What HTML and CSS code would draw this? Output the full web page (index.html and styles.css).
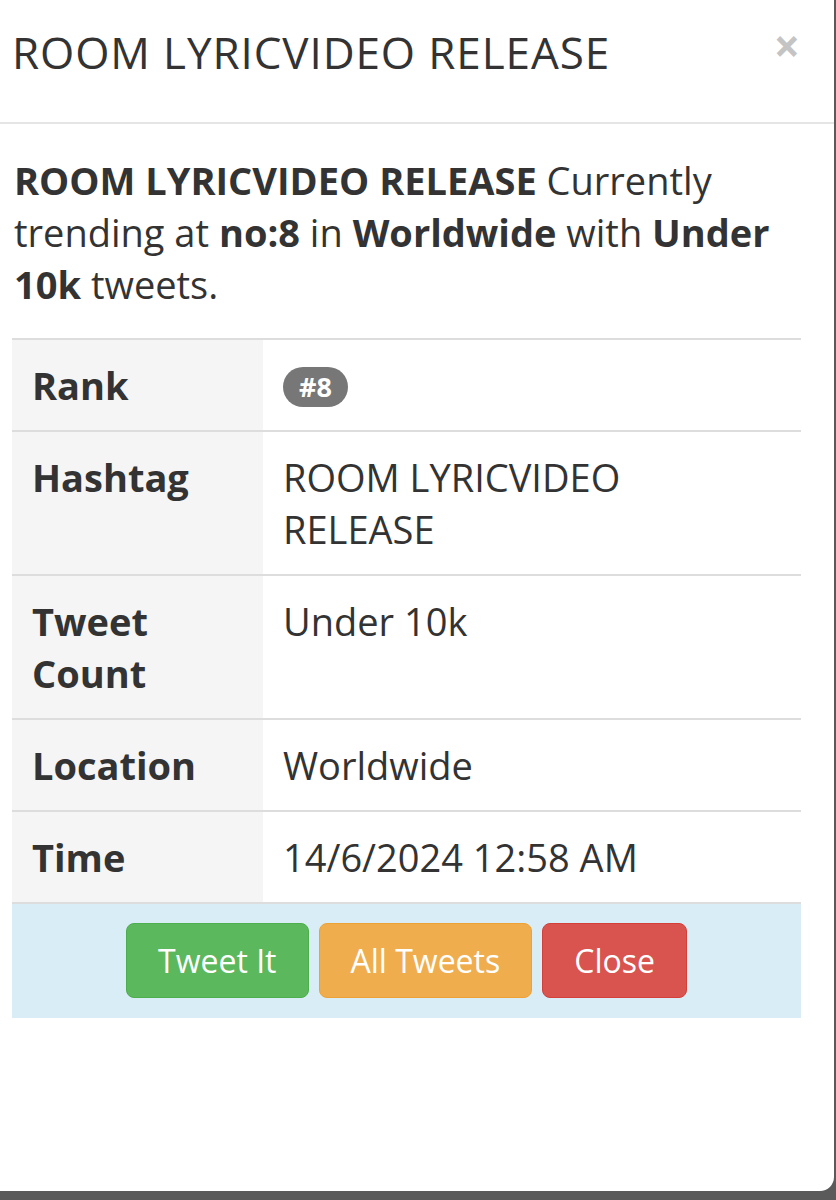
FILE: index.html
```html
<!DOCTYPE html>
<html>
<head>
<meta charset="utf-8">
<link rel="stylesheet" href="styles.css">
</head>
<body>
<div class="modal">
  <div class="modal-header">
    <h4 class="modal-title">ROOM LYRICVIDEO RELEASE</h4>
    <span class="close">×</span>
  </div>
  <div class="modal-body">
    <p class="summary"><b>ROOM LYRICVIDEO RELEASE</b> Currently trending at <b>no:8</b> in <b>Worldwide</b> with <b>Under 10k</b> tweets.</p>
    <table class="info">
      <tr><th>Rank</th><td><span class="badge">#8</span></td></tr>
      <tr><th>Hashtag</th><td>ROOM LYRICVIDEO RELEASE</td></tr>
      <tr><th>Tweet Count</th><td>Under 10k</td></tr>
      <tr><th>Location</th><td>Worldwide</td></tr>
      <tr><th>Time</th><td>14/6/2024 12:58 AM</td></tr>
      <tr class="actions"><td colspan="2">
        <div class="btns">
          <span class="btn green">Tweet It</span>
          <span class="btn orange">All Tweets</span>
          <span class="btn red">Close</span>
        </div>
      </td></tr>
    </table>
  </div>
</div>
</body>
</html>
```
FILE: styles.css
```css
html, body { margin: 0; padding: 0; }
body {
  background: #5a5a5a;
  font-family: "Open Sans", "Noto Sans", sans-serif;
  color: #333;
}
.modal {
  width: 834px;
  height: 1191px;
  background: #fff;
  border-bottom-right-radius: 14px;
  box-sizing: border-box;
}
.modal-header {
  height: 124px;
  box-sizing: border-box;
  border-bottom: 2px solid #e5e5e5;
  display: flex;
  align-items: center;
  justify-content: space-between;
  padding: 0 34px 18px 12px;
}
.modal-title {
  margin: 0;
  font-weight: 400;
  font-size: 44px;
  letter-spacing: 0.9px;
  color: #333;
}
.close {
  font-size: 46px;
  font-weight: 700;
  color: #c4c4c4;
  line-height: 1;
  margin-top: -14px;
}
.modal-body {
  padding: 30px 12px 0 12px;
}
.summary {
  margin: 0 0 28px 2px;
  font-size: 38px;
  line-height: 52px;
  width: 790px;
}
.summary b { font-weight: 700; }
.info {
  width: 789px;
  border-collapse: collapse;
  font-size: 38px;
  line-height: 52px;
}
.info th, .info td {
  border-top: 2px solid #ddd;
  padding: 19px 20px 19px 20px;
  text-align: left;
  vertical-align: top;
}
.info th {
  width: 211px;
  background: #f5f5f5;
  font-weight: 700;
}
.info td { font-weight: 400; }
.badge {
  display: inline-block;
  background: #777;
  color: #fff;
  font-size: 27px;
  font-weight: 700;
  line-height: 40px;
  padding: 0 16px;
  border-radius: 20px;
  vertical-align: 3px;
}
.actions td {
  background: #d9edf7;
  padding: 19px 0 20px 0;
}
.btns {
  display: flex;
  justify-content: center;
  gap: 10px;
}
.btn {
  display: inline-block;
  color: #fff;
  font-size: 32px;
  line-height: 43px;
  padding: 15px 31px;
  border: 1px solid transparent;
  border-radius: 8px;
}
.green { background: #5cb85c; border-color: #4cae4c; }
.orange { background: #f0ad4e; border-color: #eea236; }
.red { background: #d9534f; border-color: #d43f3a; }
```
